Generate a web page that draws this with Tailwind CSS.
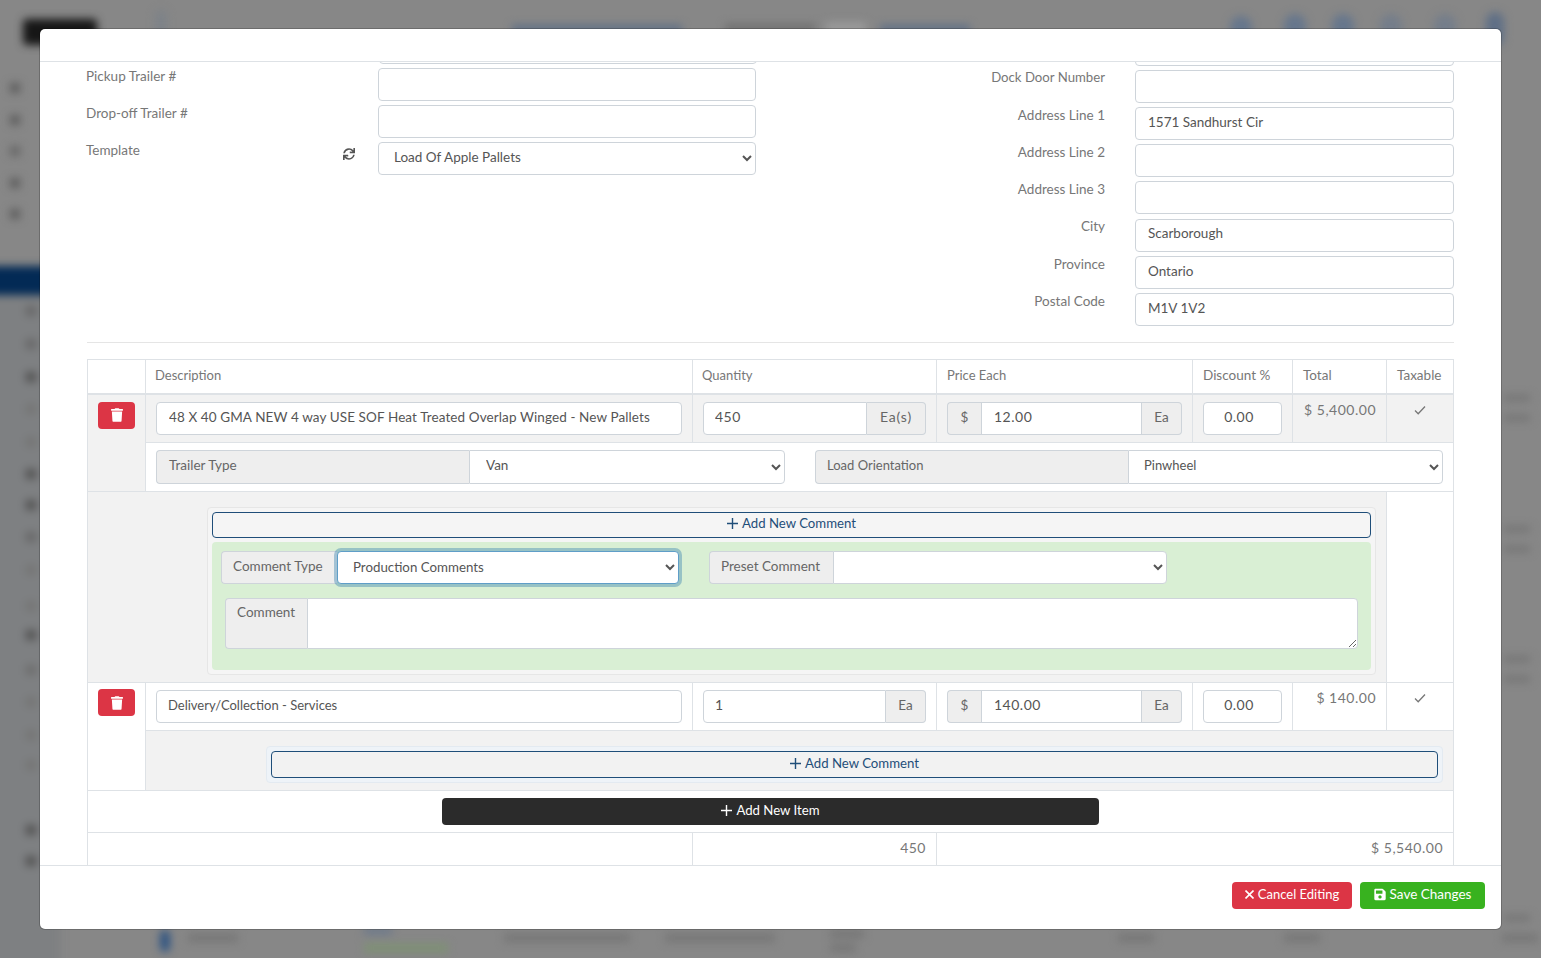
<!DOCTYPE html>
<html lang="en">
<head>
    <meta charset="UTF-8">
    <meta name="viewport" content="width=device-width, initial-scale=1.0">
    <title>Edit Order</title>
    <script src="https://cdn.jsdelivr.net/npm/@tailwindcss/browser@4"></script>
</head>
<body class="h-[958px] overflow-hidden bg-[#878787] font-['Lato',sans-serif] text-[13.5px] text-[#777]">

    <!-- blurred page behind the modal -->
    <div class="absolute inset-0 overflow-hidden">
    <div class="absolute inset-0 blur-[4px]">
        <div class="absolute -left-[10px] top-[295px] h-[680px] w-[70px] bg-[#7e8082]"></div>
        <div class="absolute left-[23px] top-[19px] h-[26px] w-[74px] rounded bg-[#161616]"></div>
        <div class="absolute left-[155px] top-[10px] h-[26px] w-[12px] rounded-full bg-[#7d8288]"></div>
        <div class="absolute left-[512px] top-[25px] h-[8px] w-[170px] bg-[#5f6f86]"></div>
        <div class="absolute left-[725px] top-[24px] h-[8px] w-[90px] bg-[#6f6f6f]"></div>
        <div class="absolute left-[826px] top-[22px] h-[12px] w-[40px] bg-[#9a9a9a]"></div>
        <div class="absolute left-[880px] top-[25px] h-[8px] w-[90px] bg-[#5f6f86]"></div>
        <div class="absolute left-[1230px] top-[16px] h-[22px] w-[22px] rounded-full bg-[#66768c]"></div>
        <div class="absolute left-[1284px] top-[14px] h-[24px] w-[22px] rounded-full bg-[#66768c]"></div>
        <div class="absolute left-[1332px] top-[14px] h-[24px] w-[22px] rounded-full bg-[#66768c]"></div>
        <div class="absolute left-[1380px] top-[14px] h-[24px] w-[22px] rounded-full bg-[#747d8a]"></div>
        <div class="absolute left-[1434px] top-[14px] h-[24px] w-[22px] rounded-full bg-[#747d8a]"></div>
        <div class="absolute left-[1486px] top-[12px] h-[34px] w-[18px] rounded-full bg-[#5f6f86]"></div>
        <div class="absolute -left-[10px] top-[266px] h-[29px] w-[60px] bg-[#032a55]"></div>
        <div class="absolute left-[10px] top-[83px] h-[10px] w-[10px] bg-[#5c5c5c]"></div>
        <div class="absolute left-[10px] top-[115px] h-[10px] w-[10px] bg-[#5c5c5c]"></div>
        <div class="absolute left-[10px] top-[146px] h-[10px] w-[10px] bg-[#666666]"></div>
        <div class="absolute left-[10px] top-[178px] h-[10px] w-[10px] bg-[#5c5c5c]"></div>
        <div class="absolute left-[10px] top-[209px] h-[10px] w-[10px] bg-[#5c5c5c]"></div>
        <div class="absolute left-[26px] top-[306px] h-[10px] w-[10px] bg-[#666666]"></div>
        <div class="absolute left-[26px] top-[339px] h-[10px] w-[10px] bg-[#666666]"></div>
        <div class="absolute left-[26px] top-[372px] h-[10px] w-[10px] bg-[#505050]"></div>
        <div class="absolute left-[26px] top-[404px] h-[10px] w-[10px] bg-[#747474]"></div>
        <div class="absolute left-[26px] top-[437px] h-[10px] w-[10px] bg-[#747474]"></div>
        <div class="absolute left-[26px] top-[469px] h-[10px] w-[10px] bg-[#505050]"></div>
        <div class="absolute left-[26px] top-[500px] h-[10px] w-[10px] bg-[#505050]"></div>
        <div class="absolute left-[26px] top-[532px] h-[10px] w-[10px] bg-[#666666]"></div>
        <div class="absolute left-[26px] top-[565px] h-[10px] w-[10px] bg-[#747474]"></div>
        <div class="absolute left-[26px] top-[601px] h-[10px] w-[10px] bg-[#747474]"></div>
        <div class="absolute left-[26px] top-[630px] h-[10px] w-[10px] bg-[#505050]"></div>
        <div class="absolute left-[26px] top-[665px] h-[10px] w-[10px] bg-[#6c6c6c]"></div>
        <div class="absolute left-[26px] top-[697px] h-[10px] w-[10px] bg-[#747474]"></div>
        <div class="absolute left-[26px] top-[730px] h-[10px] w-[10px] bg-[#747474]"></div>
        <div class="absolute left-[26px] top-[760px] h-[10px] w-[10px] bg-[#747474]"></div>
        <div class="absolute left-[26px] top-[825px] h-[10px] w-[10px] bg-[#505050]"></div>
        <div class="absolute left-[26px] top-[856px] h-[10px] w-[10px] bg-[#505050]"></div>
        <div class="absolute left-[1504px] top-[395px] h-[6px] w-[26px] bg-[#747474]"></div>
        <div class="absolute left-[1504px] top-[415px] h-[6px] w-[26px] bg-[#747474]"></div>
        <div class="absolute left-[1504px] top-[526px] h-[6px] w-[26px] bg-[#747474]"></div>
        <div class="absolute left-[1504px] top-[546px] h-[6px] w-[26px] bg-[#747474]"></div>
        <div class="absolute left-[1504px] top-[656px] h-[6px] w-[26px] bg-[#747474]"></div>
        <div class="absolute left-[1504px] top-[676px] h-[6px] w-[26px] bg-[#747474]"></div>
        <div class="absolute left-[1504px] top-[915px] h-[6px] w-[26px] bg-[#747474]"></div>
        <div class="absolute left-[160px] top-[930px] h-[22px] w-[10px] rounded-full bg-[#2f5482]"></div>
        <div class="absolute left-[188px] top-[934px] h-[8px] w-[50px] bg-[#767676]"></div>
        <div class="absolute left-[364px] top-[928px] h-[6px] w-[28px] bg-[#66768c]"></div>
        <div class="absolute left-[364px] top-[944px] h-[8px] w-[84px] bg-[#7d9272]"></div>
        <div class="absolute left-[504px] top-[934px] h-[8px] w-[126px] bg-[#767676]"></div>
        <div class="absolute left-[665px] top-[934px] h-[8px] w-[110px] bg-[#767676]"></div>
        <div class="absolute left-[830px] top-[930px] h-[8px] w-[34px] bg-[#767676]"></div>
        <div class="absolute left-[830px] top-[944px] h-[8px] w-[26px] bg-[#767676]"></div>
        <div class="absolute left-[1118px] top-[934px] h-[8px] w-[36px] bg-[#767676]"></div>
        <div class="absolute left-[1284px] top-[934px] h-[8px] w-[36px] bg-[#767676]"></div>
        <div class="absolute left-[1502px] top-[934px] h-[8px] w-[36px] bg-[#767676]"></div>
    </div>
    </div>

    <!-- modal -->
    <div class="absolute left-[40px] top-[29px] flex h-[900px] w-[1461px] flex-col overflow-hidden rounded-[5px] bg-white shadow-[0_0_0_1px_rgba(0,0,0,0.2)]">
        <div class="h-[33px] shrink-0 border-b border-[#dee2e6]"></div>

        <div class="h-[803px] shrink-0 overflow-hidden px-[47px]">
            <!-- order fields -->
            <div class="-mt-[31px] flex justify-between">
                <div class="w-[670px]">
                    <div class="mb-[4px] ml-[292px] h-[33px] w-[378px] rounded border border-[#ced4da]"></div>
                    <div class="mb-[4px] flex">
                        <label class="w-[292px] -ml-px pt-[1px] leading-[14px]">Pickup Trailer #</label>
                        <input class="h-[33px] w-[378px] rounded border border-[#ced4da] bg-white px-3">
                    </div>
                    <div class="mb-[4px] flex">
                        <label class="w-[292px] -ml-px pt-[1px] leading-[14px]">Drop-off Trailer #</label>
                        <input class="h-[33px] w-[378px] rounded border border-[#ced4da] bg-white px-3">
                    </div>
                    <div class="flex">
                        <label class="flex h-[33px] w-[292px] -ml-px justify-between pr-[23px]">
                            <span class="pt-[1px] leading-[14px]">Template</span>
                            <svg class="mt-[6px] h-3 w-3 fill-[#555]" viewBox="0 0 512 512"><path d="M440.65 12.57l4 82.77A247.16 247.16 0 0 0 255.83 8C134.73 8 33.91 94.92 12.29 209.82A12 12 0 0 0 24.09 224h49.05a12 12 0 0 0 11.67-9.26 175.91 175.91 0 0 1 317-56.94l-101.46-4.86a12 12 0 0 0-12.57 12v47.41a12 12 0 0 0 12 12H500a12 12 0 0 0 12-12V12a12 12 0 0 0-12-12h-47.37a12 12 0 0 0-11.98 12.57zM255.83 432a175.61 175.61 0 0 1-146-77.8l101.8 4.87a12 12 0 0 0 12.57-12v-47.4a12 12 0 0 0-12-12H12a12 12 0 0 0-12 12V500a12 12 0 0 0 12 12h47.35a12 12 0 0 0 12-12.6l-4.15-82.57A247.17 247.17 0 0 0 255.83 504c121.11 0 221.93-86.92 243.55-201.82a12 12 0 0 0-11.8-14.18h-49.05a12 12 0 0 0-11.67 9.26A175.86 175.86 0 0 1 255.83 432z"/></svg>
                        </label>
                        <select class="h-[33px] w-[378px] rounded border border-[#ced4da] bg-white px-[11px] pb-[3px] text-[#555]"><option>Load Of Apple Pallets</option></select>
                    </div>
                </div>

                <div class="w-[470px] pt-[2px]">
                    <div class="mb-[4px] ml-[151px] h-[33px] w-[319px] rounded border border-[#ced4da]"></div>
                    <div class="mb-[4px] flex">
                        <label class="w-[121px] whitespace-nowrap text-right text-[13.2px] leading-[14px]">Dock Door Number</label>
                        <input class="ml-[30px] h-[33px] w-[319px] rounded border border-[#ced4da] bg-white px-3">
                    </div>
                    <div class="mb-[4px] flex">
                        <label class="w-[121px] pt-[1px] text-right leading-[14px]">Address Line 1</label>
                        <input class="ml-[30px] h-[33px] w-[319px] rounded border border-[#ced4da] bg-white px-3 pb-[3px] text-[#555]" value="1571 Sandhurst Cir">
                    </div>
                    <div class="mb-[4px] flex">
                        <label class="w-[121px] pt-[1px] text-right leading-[14px]">Address Line 2</label>
                        <input class="ml-[30px] h-[33px] w-[319px] rounded border border-[#ced4da] bg-white px-3">
                    </div>
                    <div class="mb-[5px] flex">
                        <label class="w-[121px] pt-[1px] text-right leading-[14px]">Address Line 3</label>
                        <input class="ml-[30px] h-[33px] w-[319px] rounded border border-[#ced4da] bg-white px-3">
                    </div>
                    <div class="mb-[4px] flex">
                        <label class="w-[121px] text-right leading-[14px]">City</label>
                        <input class="ml-[30px] h-[33px] w-[319px] rounded border border-[#ced4da] bg-white px-3 pb-[5px] text-[#555]" value="Scarborough">
                    </div>
                    <div class="mb-[4px] flex">
                        <label class="w-[121px] pt-[1px] text-right leading-[14px]">Province</label>
                        <input class="ml-[30px] h-[33px] w-[319px] rounded border border-[#ced4da] bg-white px-3 pb-[3px] text-[#555]" value="Ontario">
                    </div>
                    <div class="flex">
                        <label class="w-[121px] pt-[1px] text-right leading-[14px]">Postal Code</label>
                        <input class="ml-[30px] h-[33px] w-[319px] rounded border border-[#ced4da] bg-white px-3 pb-[3px] text-[#555]" value="M1V 1V2">
                    </div>
                </div>
            </div>

            <hr class="mt-[16px] mb-[16px] border-[#e5e5e5]">

            <!-- line items -->
            <table class="w-[1366px] table-fixed border-collapse">
                <colgroup>
                    <col class="w-[58px]"><col class="w-[547px]"><col class="w-[244px]"><col class="w-[256px]"><col class="w-[100px]"><col class="w-[94px]"><col class="w-[67px]">
                </colgroup>
                <thead>
                    <tr class="h-[34px]">
                        <th class="border border-b-2 border-[#dee2e6]"></th>
                        <th class="border border-b-2 border-[#dee2e6] px-[9px] pb-[2px] text-left text-[13px] font-normal">Description</th>
                        <th class="border border-b-2 border-[#dee2e6] px-[9px] pb-[2px] text-left text-[13px] font-normal">Quantity</th>
                        <th class="border border-b-2 border-[#dee2e6] px-[10px] pb-[2px] text-left text-[13px] font-normal">Price Each</th>
                        <th class="border border-b-2 border-[#dee2e6] px-[10px] pb-[3px] text-left font-normal">Discount %</th>
                        <th class="border border-b-2 border-[#dee2e6] px-[10px] pb-[3px] text-left font-normal">Total</th>
                        <th class="border border-b-2 border-[#dee2e6] px-[10px] pb-[3px] text-left font-normal">Taxable</th>
                    </tr>
                </thead>
                <tbody>
                    <tr class="h-[49px] bg-[#f2f2f2]">
                        <td rowspan="2" class="border border-[#dee2e6] px-[10px] pt-[7px] align-top">
                            <button class="flex h-[27px] w-[37px] items-center justify-center rounded bg-[#dc3545]">
                                <svg class="h-[14px] w-[12px] fill-white" viewBox="0 0 448 512"><path d="M432 32H312l-9.4-18.7A24 24 0 0 0 281.1 0H166.8a23.72 23.72 0 0 0-21.4 13.3L136 32H16A16 16 0 0 0 0 48v32a16 16 0 0 0 16 16h416a16 16 0 0 0 16-16V48a16 16 0 0 0-16-16zM53.2 467a48 48 0 0 0 47.9 45h245.8a48 48 0 0 0 47.9-45L416 128H32z"/></svg>
                            </button>
                        </td>
                        <td class="border border-[#dee2e6] px-[10px]">
                            <input class="h-[33px] w-full rounded border border-[#ced4da] bg-white px-3 pb-[3px] tracking-[0.1px] text-[#555]" value="48 X 40 GMA NEW 4 way USE SOF Heat Treated Overlap Winged - New Pallets">
                        </td>
                        <td class="border border-[#dee2e6] px-[10px]">
                            <div class="flex h-[33px]">
                                <input class="w-full min-w-0 rounded-l border border-[#ced4da] bg-white pl-[11px] pr-3 pb-[3px] text-[14px] tracking-[0.5px] text-[#555]" value="450">
                                <span class="flex w-[59px] shrink-0 items-center justify-center rounded-r border border-l-0 border-[#ced4da] bg-[#eeeeee] pb-[3px] text-[14px] tracking-[0.8px] text-[#666]">Ea(s)</span>
                            </div>
                        </td>
                        <td class="border border-[#dee2e6] px-[10px]">
                            <div class="flex h-[33px]">
                                <span class="flex w-[34px] shrink-0 items-center justify-center rounded-l border border-r-0 border-[#ced4da] bg-[#eeeeee] pb-[3px] text-[#666]">$</span>
                                <input class="w-full min-w-0 border border-[#ced4da] bg-white px-3 pb-[3px] text-[14px] tracking-[0.5px] text-[#555]" value="12.00">
                                <span class="flex w-[40px] shrink-0 items-center justify-center rounded-r border border-l-0 border-[#ced4da] bg-[#eeeeee] pb-[3px] text-[#666]">Ea</span>
                            </div>
                        </td>
                        <td class="border border-[#dee2e6] px-[10px]">
                            <input class="h-[33px] w-full rounded border border-[#ced4da] bg-white pr-[7px] pb-[3px] text-center text-[14px] tracking-[0.5px] text-[#555]" value="0.00">
                        </td>
                        <td class="border border-[#dee2e6] px-[10px] pt-[4px] text-right align-top text-[14px] tracking-[0.5px]">$ 5,400.00</td>
                        <td class="border border-[#dee2e6] pt-[9px] align-top">
                            <svg class="mx-auto h-[12px] w-[12px] fill-none stroke-[#777] stroke-[1.3]" viewBox="0 0 12 12"><path d="M1 6.5l3.2 3.2L11 2.5"/></svg>
                        </td>
                    </tr>
                    <tr class="h-[49px]">
                        <td colspan="6" class="border border-[#dee2e6] px-[10px]">
                            <div class="flex gap-[30px]">
                                <div class="flex h-[34px] w-[629px]">
                                    <span class="flex w-[313px] shrink-0 items-center rounded-l border border-r-0 border-[#ced4da] bg-[#eeeeee] px-3 pb-[3px] text-[#666]">Trailer Type</span>
                                    <select class="w-full min-w-0 rounded-r border border-[#ced4da] bg-white px-3 pb-[4px] text-[#555]"><option>Van</option></select>
                                </div>
                                <div class="flex h-[34px] w-[628px]">
                                    <span class="flex w-[313px] shrink-0 items-center rounded-l border border-r-0 border-[#ced4da] bg-[#eeeeee] pl-[11px] pb-[3px] text-[13px] text-[#666]">Load Orientation</span>
                                    <select class="w-full min-w-0 rounded-r border border-[#ced4da] bg-white px-[11px] pb-[4px] text-[13px] text-[#555]"><option>Pinwheel</option></select>
                                </div>
                            </div>
                        </td>
                    </tr>
                    <tr class="h-[191px]">
                        <td colspan="6" class="border border-[#dee2e6] bg-[#f2f2f2] pl-[119px] pr-[10px] pt-[15px] align-top">
                            <div class="rounded border border-[#e6e6e6] bg-[#f5f5f5] p-[4px]">
                                <button class="flex h-[26px] w-full items-center justify-center gap-[4px] rounded border border-[#1f4e79] pb-[3px] text-[13.2px] text-[#1f4e79]">
                                    <svg class="h-[11px] w-[11px] stroke-[#1f4e79] stroke-[1.4]" viewBox="0 0 11 11"><path d="M5.5 0v11M0 5.5h11"/></svg>
                                    Add New Comment
                                </button>
                                <div class="mt-[4px] h-[128px] rounded bg-[#d9efd4] px-[9px] pt-[9px]">
                                    <div class="flex">
                                        <div class="flex h-[33px] w-[458px]">
                                            <span class="flex w-[116px] shrink-0 items-center whitespace-nowrap rounded-l border border-r-0 border-[#ced4da] bg-[#eeeeee] pl-[11px] pb-[3px] text-[#666]">Comment Type</span>
                                            <select class="w-full min-w-0 rounded border border-[#5f9ec8] bg-white px-[11px] pb-[2px] text-[13.3px] text-[#555] shadow-[0_0_0_3px_rgba(70,140,180,0.45)]"><option>Production Comments</option></select>
                                        </div>
                                        <div class="ml-[30px] flex h-[33px] w-[458px]">
                                            <span class="flex w-[124px] shrink-0 items-center whitespace-nowrap rounded-l border border-r-0 border-[#ced4da] bg-[#eeeeee] pl-[11px] pb-[3px] text-[#666]">Preset Comment</span>
                                            <select class="w-full min-w-0 rounded-r border border-[#ced4da] bg-white px-[11px] text-[#555]"><option></option></select>
                                        </div>
                                    </div>
                                    <div class="ml-[4px] mr-[4px] mt-[14px] flex h-[51px]">
                                        <span class="w-[82px] shrink-0 rounded-l border border-r-0 border-[#ced4da] bg-[#eeeeee] pl-[11px] pt-[3px] text-[#666]">Comment</span>
                                        <textarea class="w-full rounded-r border border-[#ced4da] bg-white"></textarea>
                                    </div>
                                </div>
                            </div>
                        </td>
                        <td class="border border-[#dee2e6]"></td>
                    </tr>
                    <tr class="h-[48px]">
                        <td rowspan="2" class="border border-[#dee2e6] px-[10px] pt-[6px] align-top">
                            <button class="flex h-[27px] w-[37px] items-center justify-center rounded bg-[#dc3545]">
                                <svg class="h-[14px] w-[12px] fill-white" viewBox="0 0 448 512"><path d="M432 32H312l-9.4-18.7A24 24 0 0 0 281.1 0H166.8a23.72 23.72 0 0 0-21.4 13.3L136 32H16A16 16 0 0 0 0 48v32a16 16 0 0 0 16 16h416a16 16 0 0 0 16-16V48a16 16 0 0 0-16-16zM53.2 467a48 48 0 0 0 47.9 45h245.8a48 48 0 0 0 47.9-45L416 128H32z"/></svg>
                            </button>
                        </td>
                        <td class="border border-[#dee2e6] px-[10px]">
                            <input class="h-[33px] w-full rounded border border-[#ced4da] bg-white pl-[11px] pr-3 pb-[3px] text-[13px] text-[#555]" value="Delivery/Collection - Services">
                        </td>
                        <td class="border border-[#dee2e6] px-[10px]">
                            <div class="flex h-[33px]">
                                <input class="w-full min-w-0 rounded-l border border-[#ced4da] bg-white pl-[11px] pr-3 pb-[4px] text-[14px] tracking-[0.5px] text-[#555]" value="1">
                                <span class="flex w-[40px] shrink-0 items-center justify-center rounded-r border border-l-0 border-[#ced4da] bg-[#eeeeee] pb-[3px] text-[#666]">Ea</span>
                            </div>
                        </td>
                        <td class="border border-[#dee2e6] px-[10px]">
                            <div class="flex h-[33px]">
                                <span class="flex w-[34px] shrink-0 items-center justify-center rounded-l border border-r-0 border-[#ced4da] bg-[#eeeeee] pb-[3px] text-[#666]">$</span>
                                <input class="w-full min-w-0 border border-[#ced4da] bg-white px-3 pb-[4px] text-[14px] tracking-[0.5px] text-[#555]" value="140.00">
                                <span class="flex w-[40px] shrink-0 items-center justify-center rounded-r border border-l-0 border-[#ced4da] bg-[#eeeeee] pb-[3px] text-[#666]">Ea</span>
                            </div>
                        </td>
                        <td class="border border-[#dee2e6] px-[10px]">
                            <input class="h-[33px] w-full rounded border border-[#ced4da] bg-white pr-[7px] pb-[4px] text-center text-[14px] tracking-[0.5px] text-[#555]" value="0.00">
                        </td>
                        <td class="border border-[#dee2e6] px-[10px] pt-[4px] text-right align-top text-[14px] tracking-[0.5px]">$ 140.00</td>
                        <td class="border border-[#dee2e6] pt-[9px] align-top">
                            <svg class="mx-auto h-[12px] w-[12px] fill-none stroke-[#777] stroke-[1.3]" viewBox="0 0 12 12"><path d="M1 6.5l3.2 3.2L11 2.5"/></svg>
                        </td>
                    </tr>
                    <tr class="h-[60px]">
                        <td colspan="6" class="border border-[#dee2e6] bg-[#f2f2f2] pl-[120px] pr-[10px] pt-[15px] align-top">
                            <div class="rounded border border-[#e3eaf1] bg-[#eef3f8] p-[4px]">
                                <button class="flex h-[27px] w-full items-center justify-center gap-[4px] rounded border border-[#1f4e79] bg-[#f2f2f2] pb-[2px] text-[13.2px] text-[#1f4e79]">
                                    <svg class="h-[11px] w-[11px] stroke-[#1f4e79] stroke-[1.4]" viewBox="0 0 11 11"><path d="M5.5 0v11M0 5.5h11"/></svg>
                                    Add New Comment
                                </button>
                            </div>
                        </td>
                    </tr>
                    <tr class="h-[42px]">
                        <td colspan="7" class="border border-[#dee2e6]">
                            <button class="mx-auto flex h-[27px] w-[657px] items-center justify-center gap-[4px] rounded bg-[#2b2b2b] pb-[2px] text-[13.2px] text-white">
                                <svg class="h-[11px] w-[11px] stroke-white stroke-[1.4]" viewBox="0 0 11 11"><path d="M5.5 0v11M0 5.5h11"/></svg>
                                Add New Item
                            </button>
                        </td>
                    </tr>
                    <tr class="h-[33px]">
                        <td colspan="2" class="border border-[#dee2e6]"></td>
                        <td class="border border-[#dee2e6] px-[10px] pb-[4px] text-right text-[14px] tracking-[0.5px]">450</td>
                        <td colspan="4" class="border border-[#dee2e6] px-[10px] pb-[4px] text-right text-[14px] tracking-[0.5px]">$ 5,540.00</td>
                    </tr>
                </tbody>
            </table>
        </div>

        <div class="flex h-[64px] shrink-0 items-start justify-end gap-[8px] border-t border-[#dee2e6] px-[16px] pt-[16px]">
            <button class="flex h-[27px] w-[120px] items-center justify-center gap-[4px] rounded bg-[#dc3545] pb-[2px] text-[13px] text-white">
                <svg class="h-[9px] w-[9px] stroke-white stroke-[1.6]" viewBox="0 0 9 9"><path d="M0.5 0.5l8 8M8.5 0.5l-8 8"/></svg>
                Cancel Editing
            </button>
            <button class="flex h-[27px] w-[125px] items-center justify-center gap-[4px] rounded bg-[#38b21f] pb-[3px] text-white">
                <svg class="h-[13px] w-[12px] fill-white" viewBox="0 0 448 512"><path d="M433.941 129.941l-83.882-83.882A48 48 0 0 0 316.118 32H48C21.49 32 0 53.49 0 80v352c0 26.51 21.49 48 48 48h352c26.51 0 48-21.49 48-48V163.882a48 48 0 0 0-14.059-33.941zM224 416c-35.346 0-64-28.654-64-64 0-35.346 28.654-64 64-64s64 28.654 64 64c0 35.346-28.654 64-64 64zm96-304.52V212c0 6.627-5.373 12-12 12H76c-6.627 0-12-5.373-12-12V108c0-6.627 5.373-12 12-12h228.52c3.183 0 6.235 1.264 8.485 3.515l3.48 3.48A11.996 11.996 0 0 1 320 111.48z"/></svg>
                Save Changes
            </button>
        </div>
    </div>
</body>
</html>
